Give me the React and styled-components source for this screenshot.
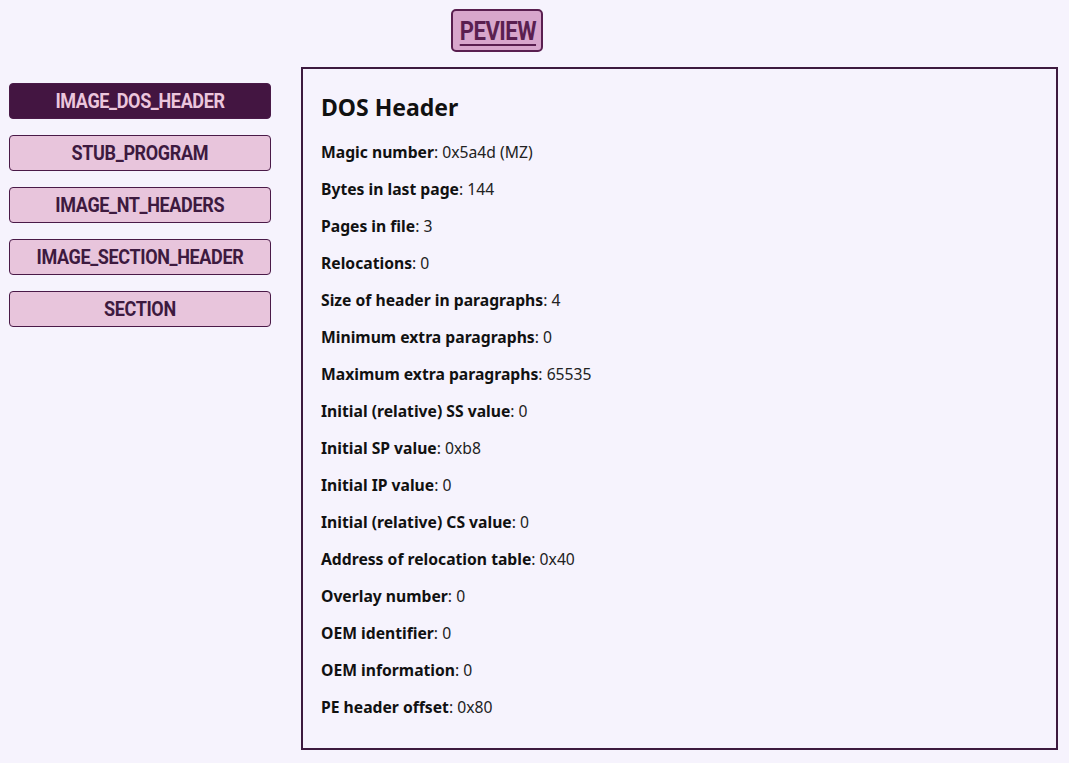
import React, { useState } from 'react';
import styled, { createGlobalStyle } from 'styled-components';

const GlobalStyle = createGlobalStyle`
    body {
        margin: 0;
        background-color: #f6f3fd;
        font-family: "Noto Sans", "Noto Sans CJK KR", sans-serif;
    }
`;

const Page = styled.div`
    padding: 9px 11px 12px 9px;
`;

const Header = styled.header`
    display: flex;
    padding-left: 442px;
    margin-bottom: 15px;
`;

// condensed look: the installed Roboto has no narrow cut, so squeeze it
const Condensed = styled.span`
    display: inline-block;
    transform: scaleX(${props => props.squeeze || 0.9});
    white-space: nowrap;
    text-decoration: ${props => (props.underline ? 'underline' : 'none')};
    text-decoration-thickness: 2px;
    text-underline-offset: 4px;
`;

const Logo = styled.button`
    width: 92px;
    height: 43px;
    padding: 0;
    border: 2px solid #5a1f50;
    border-radius: 5px;
    background-color: #d8a6cc;
    color: #5a1f50;
    font-family: Roboto, "Liberation Sans", sans-serif;
    font-weight: 700;
    font-size: 26px;
    letter-spacing: -0.6px;
    cursor: pointer;
`;

const Main = styled.div`
    display: flex;
    align-items: flex-start;
    gap: 30px;
`;

const Sidebar = styled.nav`
    display: flex;
    flex-direction: column;
    gap: 16px;
    width: 262px;
    padding-top: 16px;
`;

const NavButton = styled.button`
    height: 36px;
    padding: 0;
    border: 1px solid #4a1a48;
    border-radius: 4px;
    background-color: ${props => (props.active ? '#431541' : '#e8c5dc')};
    color: ${props => (props.active ? '#ecc6dd' : '#3d1a3f')};
    font-family: Roboto, "Liberation Sans", sans-serif;
    font-weight: 700;
    font-size: 20px;
    letter-spacing: -0.4px;
    cursor: pointer;
`;

const Panel = styled.section`
    flex: 1;
    border: 2px solid #3d1a3f;
    padding: 19px 18px 22px;
    color: #111;
`;

const Title = styled.h2`
    margin: 0 0 8px;
    font-size: 23px;
    font-weight: 700;
    line-height: 38px;
`;

const Row = styled.p`
    margin: 0;
    font-size: 15.7px;
    line-height: 37px;
    color: #222;
    & b {
        font-weight: 700;
        color: #111;
    }
`;

const fields = [
    ['Magic number', '0x5a4d (MZ)'],
    ['Bytes in last page', '144'],
    ['Pages in file', '3'],
    ['Relocations', '0'],
    ['Size of header in paragraphs', '4'],
    ['Minimum extra paragraphs', '0'],
    ['Maximum extra paragraphs', '65535'],
    ['Initial (relative) SS value', '0'],
    ['Initial SP value', '0xb8'],
    ['Initial IP value', '0'],
    ['Initial (relative) CS value', '0'],
    ['Address of relocation table', '0x40'],
    ['Overlay number', '0'],
    ['OEM identifier', '0'],
    ['OEM information', '0'],
    ['PE header offset', '0x80'],
];

const sections = ['IMAGE_DOS_HEADER', 'STUB_PROGRAM', 'IMAGE_NT_HEADERS', 'IMAGE_SECTION_HEADER', 'SECTION'];

export default function App() {
    const [selected, setSelected] = useState('IMAGE_DOS_HEADER');

    return (
        <Page>
            <GlobalStyle />
            <Header>
                <Logo>
                    <Condensed squeeze={0.85} underline>PEVIEW</Condensed>
                </Logo>
            </Header>
            <Main>
                <Sidebar>
                    {sections.map(name => (
                        <NavButton key={name} active={name === selected} onClick={() => setSelected(name)}>
                            <Condensed>{name}</Condensed>
                        </NavButton>
                    ))}
                </Sidebar>
                <Panel>
                    <Title>DOS Header</Title>
                    {fields.map(([label, value]) => (
                        <Row key={label}>
                            <b>{label}</b>: {value}
                        </Row>
                    ))}
                </Panel>
            </Main>
        </Page>
    );
}
